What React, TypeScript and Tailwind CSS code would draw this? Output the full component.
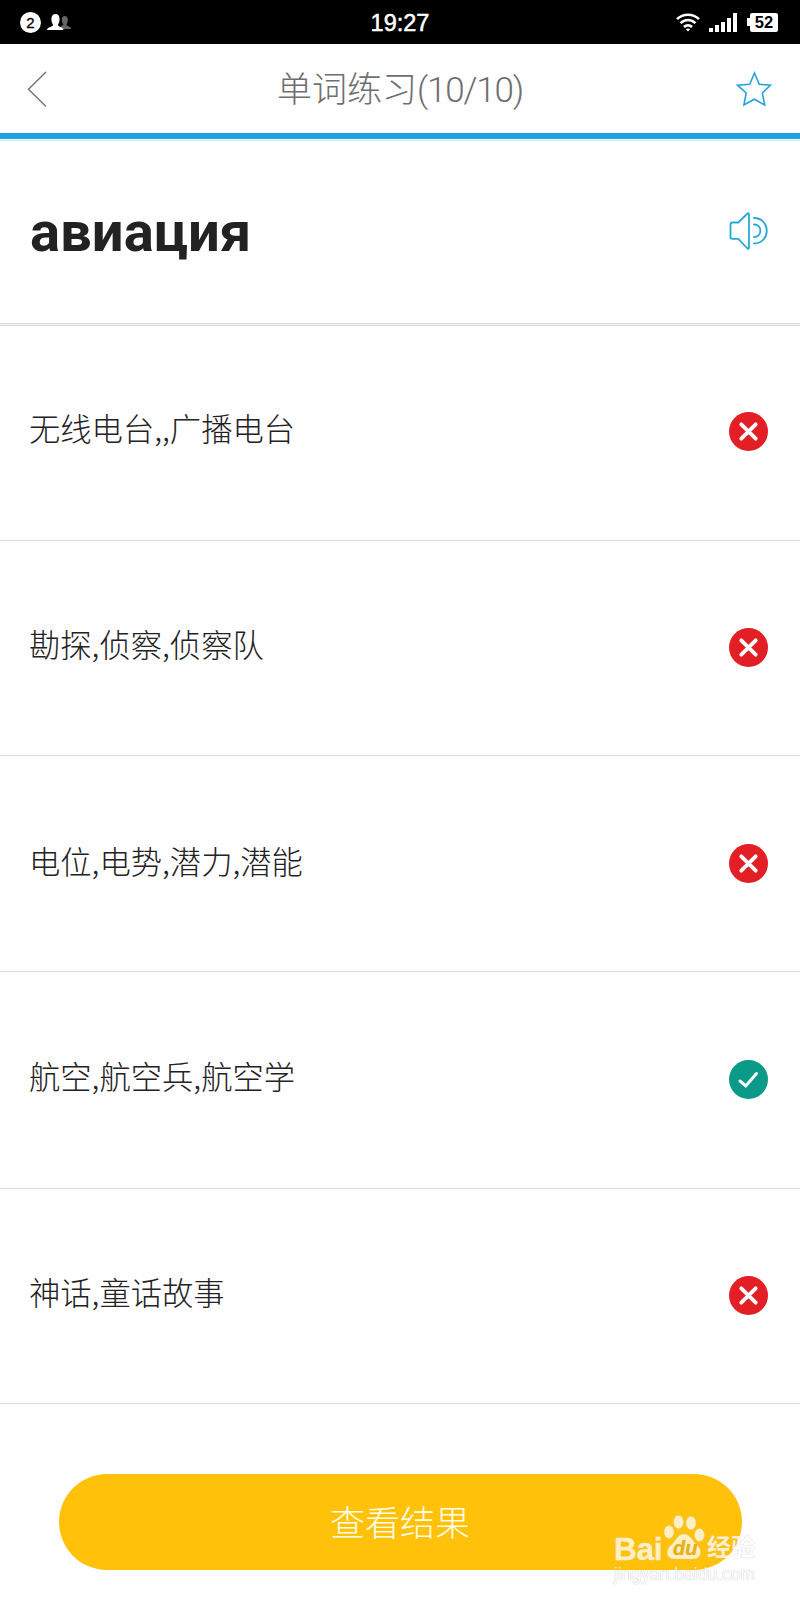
import { clsx } from "clsx";

type Option = { text: string; correct: boolean; height: string };

const options: Option[] = [
  { text: "无线电台,,广播电台", correct: false, height: "h-[215px] pb-1" },
  { text: "勘探,侦察,侦察队", correct: false, height: "h-[215px] pb-0.5" },
  { text: "电位,电势,潜力,潜能", correct: false, height: "h-[216px]" },
  { text: "航空,航空兵,航空学", correct: true, height: "h-[217px] pb-0.5" },
  { text: "神话,童话故事", correct: false, height: "h-[215px] pb-0.5" },
];

function StatusBar() {
  return (
    <div className="flex h-11 items-center justify-between bg-black pr-[22px] pl-5 font-['Liberation_Sans',sans-serif] text-white">
      <div className="flex w-[120px] items-center gap-[6px]">
        <span className="flex size-[21px] items-center justify-center rounded-full bg-white text-[15px] leading-none font-medium text-black [-webkit-text-stroke:0.3px_#000]">
          2
        </span>
        <svg width="25" height="18" viewBox="0 0 25 18" aria-hidden>
          <path fill="#666" d="M13 16v-2l3.500-2.500c-2.500-3-2.500-8.500 1.300-8.500s3.700 5.500 1.700 8.500c-.2 2.200 4.500 1.300 4.500 4.500z" />
          <path
            fill="#fff"
            d="M0 17c0-3.500 5.800-2.500 6-5.300C3.800 8.500 3.300 1 8.500 1s4.700 7.500 2.500 10.700c.2 2.800 5.500 1.800 5.500 5.300z"
          />
        </svg>
      </div>
      <span className="ml-0.5 pt-[3px] text-[23.500px] leading-none [-webkit-text-stroke:0.5px_#fff]">19:27</span>
      <div className="flex w-[120px] items-center justify-end">
        <svg width="24" height="19" viewBox="0 0 24 19" fill="none" stroke="#fff" strokeWidth="2.500" aria-hidden>
          <path d="M1 6.200C7 .1 17 .1 23 6.200M4.500 10.200c4.300-4.300 10.700-4.300 15 0M8 14c2.300-2.200 5.700-2.200 8 0" />
          <path d="M9.900 16.300 12 18.500l2.100-2.200q-2.100-1.500-4.200 0z" fill="#fff" stroke="none" />
        </svg>
        <svg className="ml-[9px]" width="28" height="19" viewBox="0 0 28 19" fill="#fff" aria-hidden>
          <path d="M0 15h4v4H0zM6 12h4v7H6zM12 9h4v10h-4zM18 5h4v14h-4zM24 0h4v19h-4z" />
        </svg>
        <span className="ml-[10px] h-2 w-[3px] bg-white" />
        <span className="flex h-[19px] w-[28px] items-center justify-center rounded-[2px] bg-white text-[16.500px] leading-none font-bold text-black">
          52
        </span>
      </div>
    </div>
  );
}

function Header() {
  return (
    <header className="flex h-[89px] items-center justify-between pr-[28px] pl-[27px]">
      <svg width="20" height="36" viewBox="0 0 20 36" fill="none" stroke="#777" strokeWidth="1.500" aria-hidden>
        <path d="M19 1 1.500 18.300 19 35.500" />
      </svg>
      <h1 className="ml-[17px] pt-1 font-['Roboto','Noto_Sans_CJK_SC',sans-serif] text-[35px] leading-none font-light text-[#6f6f6f]">
        单词练习<span className="tracking-[-1.150px]">(10/10)</span>
      </h1>
      <svg width="36" height="36" viewBox="0 0 36 36" fill="none" stroke="#22a5dc" strokeWidth="1.600" aria-hidden>
        <path d="M18.500 2 23.300 13.300 34.500 14.200 26.400 22 28.700 34 18.300 28.200 7.900 34 10.200 22 1.500 14.200 13.700 13.300Z" />
      </svg>
    </header>
  );
}

function Speaker() {
  return (
    <svg width="40" height="38" viewBox="0 0 40 38" fill="none" stroke="#25a9d6" strokeWidth="1.800" aria-hidden>
      <path
        d="M1.500 12.300q0-1.800 1.800-1.800h6L18 2q2-1.800 2 .8v32.400q0 2.600-2 .8L9.300 26.800h-6q-1.800 0-1.800-1.800z"
        strokeLinejoin="round"
      />
      <path d="M25 6c17 0 17 25.500 0 25.500M25 12.500c8.500 0 8.500 12.500 0 12.500" strokeLinecap="round" />
    </svg>
  );
}

function Mark({ correct }: { correct: boolean }) {
  return (
    <span
      className={clsx(
        "flex size-[39px] items-center justify-center rounded-full",
        correct ? "bg-[#0b9a87]" : "bg-[#e31f26]",
      )}
    >
      <svg
        width="39"
        height="39"
        viewBox="0 0 39 39"
        fill="none"
        stroke="#fff"
        strokeWidth={correct ? 3 : 3.8}
        strokeLinecap="round"
        aria-hidden
      >
        <path d={correct ? "M11 21l5.800 5L27.500 13.500" : "M12.300 12.300l14.400 14.400M26.700 12.300 12.300 26.700"} />
      </svg>
    </span>
  );
}

function Watermark() {
  return (
    <div className="absolute top-[1514px] left-[614px] w-[146px] opacity-75">
      <div className="flex h-[46px] items-end font-['Liberation_Sans','Noto_Sans_CJK_SC',sans-serif] leading-none font-bold text-white [text-shadow:0_0_1px_#b5b5b5]">
        <span className="-mb-1 w-[48px] text-[31.500px] leading-[30px] tracking-[-0.200px] [-webkit-text-stroke:0.4px_#fff]">
          Bai
        </span>
        <span className="relative ml-[1px] h-[46px] w-[42px] shrink-0">
          <svg width="42" height="46" viewBox="0 0 42 46" fill="#fff" stroke="#ccc" strokeWidth=".5" aria-hidden>
            <ellipse cx="6" cy="18" rx="5" ry="6.500" />
            <ellipse cx="15.500" cy="8" rx="5" ry="6.800" />
            <ellipse cx="28" cy="9" rx="5" ry="6.800" />
            <ellipse cx="36.500" cy="21" rx="5" ry="6.500" />
            <path d="M21 20c7 0 8 7 13 11 6 5 4 14-3 14H11C3 45 2 36 8 31c5-4 6-11 13-11z" />
          </svg>
          <span className="absolute top-[24px] left-[10px] text-[20px] text-[#e5ae10] italic">du</span>
        </span>
        <span className="ml-[2px] text-[24px] whitespace-nowrap">经验</span>
      </div>
      <div className="mt-[5px] font-['Liberation_Sans',sans-serif] text-[17.500px] leading-[18px] text-white [text-shadow:0_0_1px_#999]">
        jingyan.baidu.com
      </div>
    </div>
  );
}

export default function App() {
  return (
    <main className="relative h-[1600px] w-[800px] overflow-hidden bg-[#fefefe]">
      <StatusBar />
      <Header />
      <div className="h-[6px] bg-[#1ba3e2]" />
      <div className="mt-px h-px bg-[#c5ebf8]" />

      <section className="flex h-[182px] items-center justify-between pr-[31px] pb-0.5 pl-[30px]">
        <h2 className="pt-0.5 font-['Roboto',sans-serif] text-[56.200px] leading-none font-bold text-[#222]">
          авиация
        </h2>
        <Speaker />
      </section>
      <div className="h-[3px] border-y border-[#d9d9d9] bg-[#f5f5f5]" />

      <ul>
        {options.map((option) => (
          <li
            key={option.text}
            className={clsx(
              "flex items-center justify-between border-b border-[#dcdcdc] pr-[32px] pl-[29px]",
              option.height,
            )}
          >
            <span className="pb-1.5 font-['Noto_Sans_CJK_SC',sans-serif] text-[31.300px] leading-none font-light text-[#222]">
              {option.text}
            </span>
            <Mark correct={option.correct} />
          </li>
        ))}
      </ul>

      <button className="mx-auto mt-[70px] flex h-24 w-[683px] items-center justify-center rounded-full bg-[#ffc10a] pb-1 font-['Noto_Sans_CJK_SC',sans-serif] text-[35px] leading-none font-light text-[#fffde8]">
        查看结果
      </button>
      <Watermark />
    </main>
  );
}
